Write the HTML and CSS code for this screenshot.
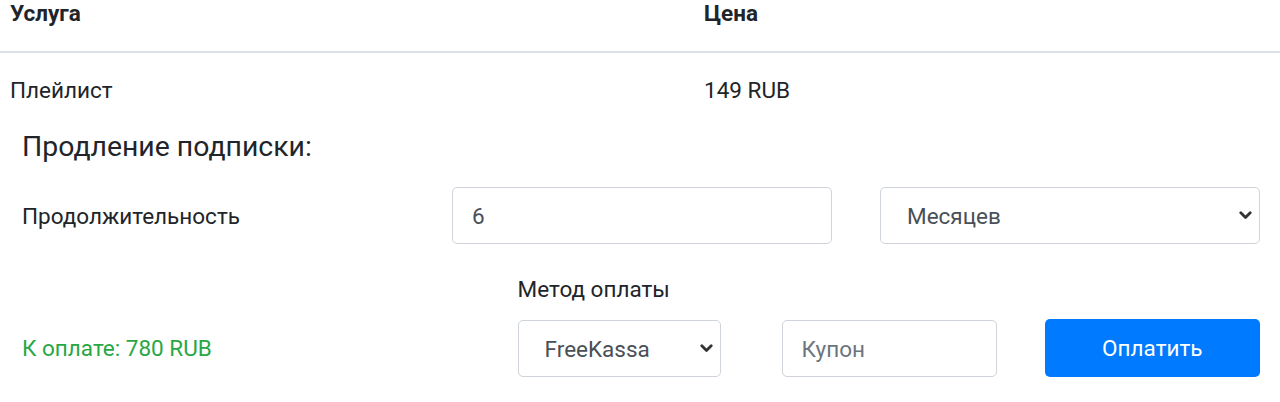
FILE: index.html
```html
<!DOCTYPE html>
<html lang="ru">
<head>
<meta charset="utf-8">
<link rel="stylesheet" href="styles.css">
</head>
<body>
<table class="services">
  <thead>
    <tr><th class="col-name">Услуга</th><th>Цена</th></tr>
  </thead>
  <tbody>
    <tr><td class="col-name">Плейлист</td><td>149 RUB</td></tr>
  </tbody>
</table>

<section class="renew">
  <h2 class="renew-title">Продление подписки:</h2>

  <div class="duration-row">
    <label class="duration-label" for="dur">Продолжительность</label>
    <input id="dur" class="field field-dur" type="text" value="6">
    <div class="select-wrap select-unit">
      <select class="field select">
        <option>Месяцев</option>
      </select>
      <svg class="chevron" width="13" height="9" viewBox="0 0 13 9"><path d="M1.8 1.8 L6.5 6.5 L11.2 1.8" fill="none" stroke="#333" stroke-width="2.8" stroke-linecap="round" stroke-linejoin="round"/></svg>
    </div>
  </div>

  <div class="pay-row">
    <div class="total">К оплате: 780 RUB</div>
    <div class="method">
      <div class="method-label">Метод оплаты</div>
      <div class="select-wrap select-method">
        <select class="field select">
          <option>FreeKassa</option>
        </select>
        <svg class="chevron" width="13" height="9" viewBox="0 0 13 9"><path d="M1.8 1.8 L6.5 6.5 L11.2 1.8" fill="none" stroke="#333" stroke-width="2.8" stroke-linecap="round" stroke-linejoin="round"/></svg>
      </div>
    </div>
    <input class="field field-coupon" type="text" placeholder="Купон">
    <button class="btn-pay" type="button">Оплатить</button>
  </div>
</section>
</body>
</html>
```

FILE: styles.css
```css
* { box-sizing: border-box; }

html, body {
  margin: 0;
  padding: 0;
  background: #fff;
}

body {
  font-family: Roboto, "Liberation Sans", sans-serif;
  font-size: 22.5px;
  color: #212529;
  width: 1280px;
  height: 402px;
  overflow: hidden;
}

.services {
  width: 100%;
  border-collapse: collapse;
}

.services th,
.services td {
  text-align: left;
  line-height: 26px;
  padding: 0 10px;
}

.services th {
  font-weight: 700;
  padding-bottom: 25px;
  border-bottom: 2px solid #dee2e6;
}

.services td {
  padding-top: 24px;
  padding-bottom: 10px;
}

.services .col-name {
  width: 694px;
}

.renew {
  padding: 0 20px 0 22px;
}

.renew-title {
  margin: 0;
  font-weight: 400;
  font-size: 28.4px;
  line-height: 36px;
  padding-top: 16px;
}

.duration-row {
  display: flex;
  align-items: center;
  margin-top: 22px;
}

.duration-label {
  width: 430px;
  line-height: 26px;
}

.field {
  font-family: Roboto, "Liberation Sans", sans-serif;
  font-size: 22.5px;
  color: #495057;
  height: 57px;
  border: 1px solid #ced4da;
  border-radius: 5px;
  background: #fff;
  padding: 0 19px;
  outline: none;
}

.field::placeholder {
  color: #6c757d;
}

.field-dur {
  width: 380px;
}

.select-wrap {
  position: relative;
}

.select {
  appearance: none;
  -webkit-appearance: none;
  width: 100%;
  padding-left: 26px;
}

.chevron {
  position: absolute;
  top: 24px;
  right: 8px;
  pointer-events: none;
}

.select-unit {
  width: 380px;
  margin-left: 48px;
}

.pay-row {
  display: flex;
  align-items: flex-end;
}

.total {
  width: 497px;
  color: #28a745;
  line-height: 26px;
  padding-bottom: 16px;
}

.method {
  width: 203px;
  padding-top: 32px;
}

.method-label {
  line-height: 26px;
  margin-bottom: 18px;
  color: #212529;
}

.select-method {
  width: 203px;
}

.field-coupon {
  width: 215px;
  margin-left: 61px;
}

.btn-pay {
  width: 216px;
  height: 58px;
  margin-left: 48px;
  border: none;
  border-radius: 5px;
  background: #007bff;
  color: #fff;
  font-family: Roboto, "Liberation Sans", sans-serif;
  font-size: 22.5px;
  cursor: pointer;
}
```
